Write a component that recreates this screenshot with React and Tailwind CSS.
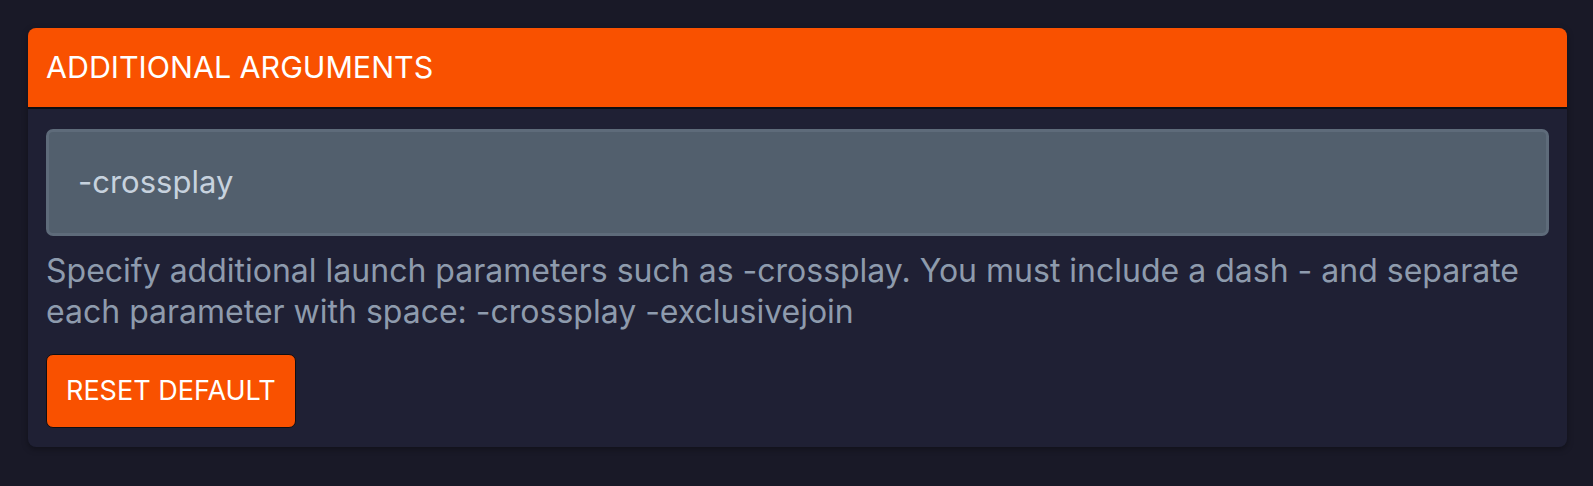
export default function App() {
  return (
    <div className="min-h-[486px] w-full bg-[#191927] pl-[28px] pr-[26px] pt-[28px] pb-[39px]" style={{ fontFamily: 'Inter, "Liberation Sans", sans-serif' }}>
      <div className="overflow-hidden rounded-[8px] bg-[#1f2034] shadow-[0_2px_6px_rgba(0,0,0,0.35)]">
        <div className="flex h-[81px] items-center border-b-2 border-[#0d0d12] bg-[#f95100] px-[18px]">
          <span className="text-[30.4px] uppercase leading-none text-white">Additional Arguments</span>
        </div>
        <div className="px-[18px] pt-[20px] pb-[19px]">
          <div className="flex h-[107px] items-center rounded-[7px] border-[3px] border-[#5e6b7a] bg-[#525f6d] px-[29px]">
            <span className="text-[31px] text-[#c7d2de]">-crossplay</span>
          </div>
          <p className="mt-[14px] text-[32px] leading-[41px] text-[#8e9bad]">
            Specify additional launch parameters such as -crossplay. You must include a dash - and separate
            <br />
            each parameter with space: -crossplay -exclusivejoin
          </p>
          <button className="mt-[22px] flex h-[74px] items-center rounded-[7px] border border-[#0e0e12] bg-[#f95100] px-[19px] text-[27px] uppercase text-white">
            Reset Default
          </button>
        </div>
      </div>
    </div>
  );
}
